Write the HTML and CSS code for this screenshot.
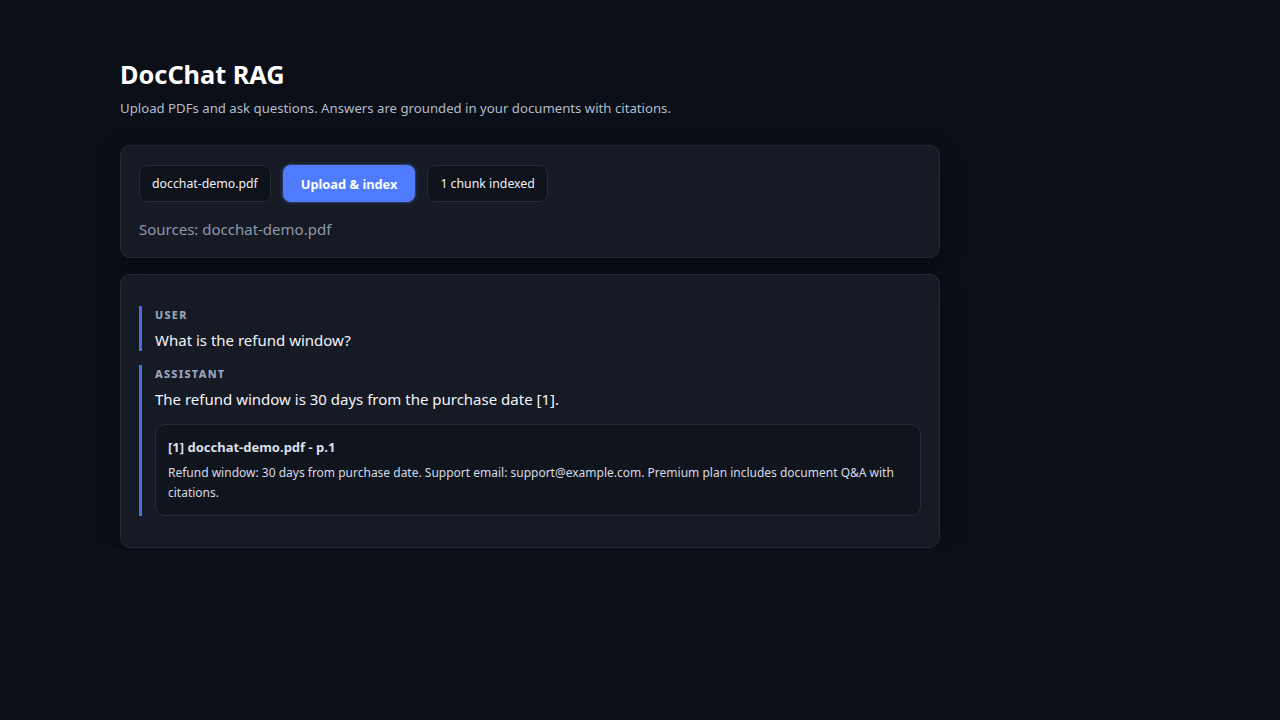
FILE: index.html
```html
<!DOCTYPE html>
<html lang="en">
<head>
  <meta charset="UTF-8" />
  <meta name="viewport" content="width=device-width, initial-scale=1.0" />
  <title>DocChat RAG</title>
  <link rel="stylesheet" href="styles.css">
</head>
<body>
  <main class="wrap">
    <header class="head">
      <h1>DocChat RAG</h1>
      <p class="sub">Upload PDFs and ask questions. Answers are grounded in your documents with citations.</p>
    </header>

    <section class="card upload">
      <div class="row">
        <span class="chip">docchat-demo.pdf</span>
        <button class="btn">Upload &amp; index</button>
        <span class="chip">1 chunk indexed</span>
      </div>
      <p class="sources">Sources: docchat-demo.pdf</p>
    </section>

    <section class="card chat">
      <div class="msg">
        <div class="role">User</div>
        <div class="text">What is the refund window?</div>
      </div>
      <div class="msg">
        <div class="role">Assistant</div>
        <div class="text">The refund window is 30 days from the purchase date [1].</div>
        <div class="cite">
          <div class="cite-title">[1] docchat-demo.pdf - p.1</div>
          <div class="cite-body">Refund window: 30 days from purchase date. Support email: support@example.com. Premium plan includes document Q&amp;A with citations.</div>
        </div>
      </div>
    </section>
  </main>
</body>
</html>
```

FILE: styles.css
```css
body {
  margin: 0;
  font-family: "Noto Sans", "Open Sans", sans-serif;
  background-color: #0b0f17;
  color: #e8ecf3;
}
.wrap {
  width: 820px;
  margin-left: 120px;
  padding-top: 57px;
}
.head h1 {
  margin: 0;
  font-size: 25.3px;
  font-weight: 700;
  color: #ffffff;
  line-height: 34px;
}
.sub {
  margin: 8px 0 0;
  font-size: 13.2px;
  color: #b3bccb;
  line-height: 18px;
}
.card {
  background: #161a24;
  border: 1px solid #232836;
  border-radius: 10px;
  box-shadow: 0 8px 24px rgba(0, 0, 0, 0.35);
}
.upload {
  margin-top: 28px;
  padding: 18px 18px 18px;
}
.row {
  display: flex;
  align-items: center;
  gap: 11px;
}
.chip {
  display: inline-flex;
  align-items: center;
  height: 35px;
  padding: 0 12px;
  border: 1px solid #262b3a;
  border-radius: 8px;
  background: #0e121b;
  font-size: 12.3px;
  color: #eef1f6;
}
.btn {
  height: 39px;
  padding: 0 18px;
  border: 1px solid #2d3a5c;
  border-radius: 9px;
  background: #4f7cff;
  color: #ffffff;
  font-family: inherit;
  font-size: 12.8px;
  font-weight: 700;
  box-shadow: 0 0 0 2px #1a2236;
}
.sources {
  margin: 16px 0 0;
  font-size: 15px;
  color: #8e98aa;
  line-height: 20px;
}
.chat {
  margin-top: 16px;
  padding: 31px 18px 31px;
}
.msg {
  border-left: 3px solid #4a6fdd;
  padding-left: 13px;
}
.msg + .msg {
  margin-top: 14px;
}
.role {
  font-size: 10.8px;
  font-weight: 800;
  letter-spacing: 1.3px;
  text-transform: uppercase;
  color: #9aa6ba;
  line-height: 16px;
  padding-top: 1px;
}
.text {
  margin-top: 6px;
  font-size: 15px;
  line-height: 22px;
  color: #f3f5f9;
}
.cite {
  margin-top: 14px;
  background: #10141d;
  border: 1px solid #252a37;
  border-radius: 10px;
  padding: 12px 12px 12px;
}
.cite-title {
  font-size: 13px;
  font-weight: 700;
  color: #d9dfea;
  line-height: 20px;
}
.cite-body {
  margin-top: 6px;
  font-size: 12px;
  line-height: 20px;
  color: #d6dbe5;
}
```
